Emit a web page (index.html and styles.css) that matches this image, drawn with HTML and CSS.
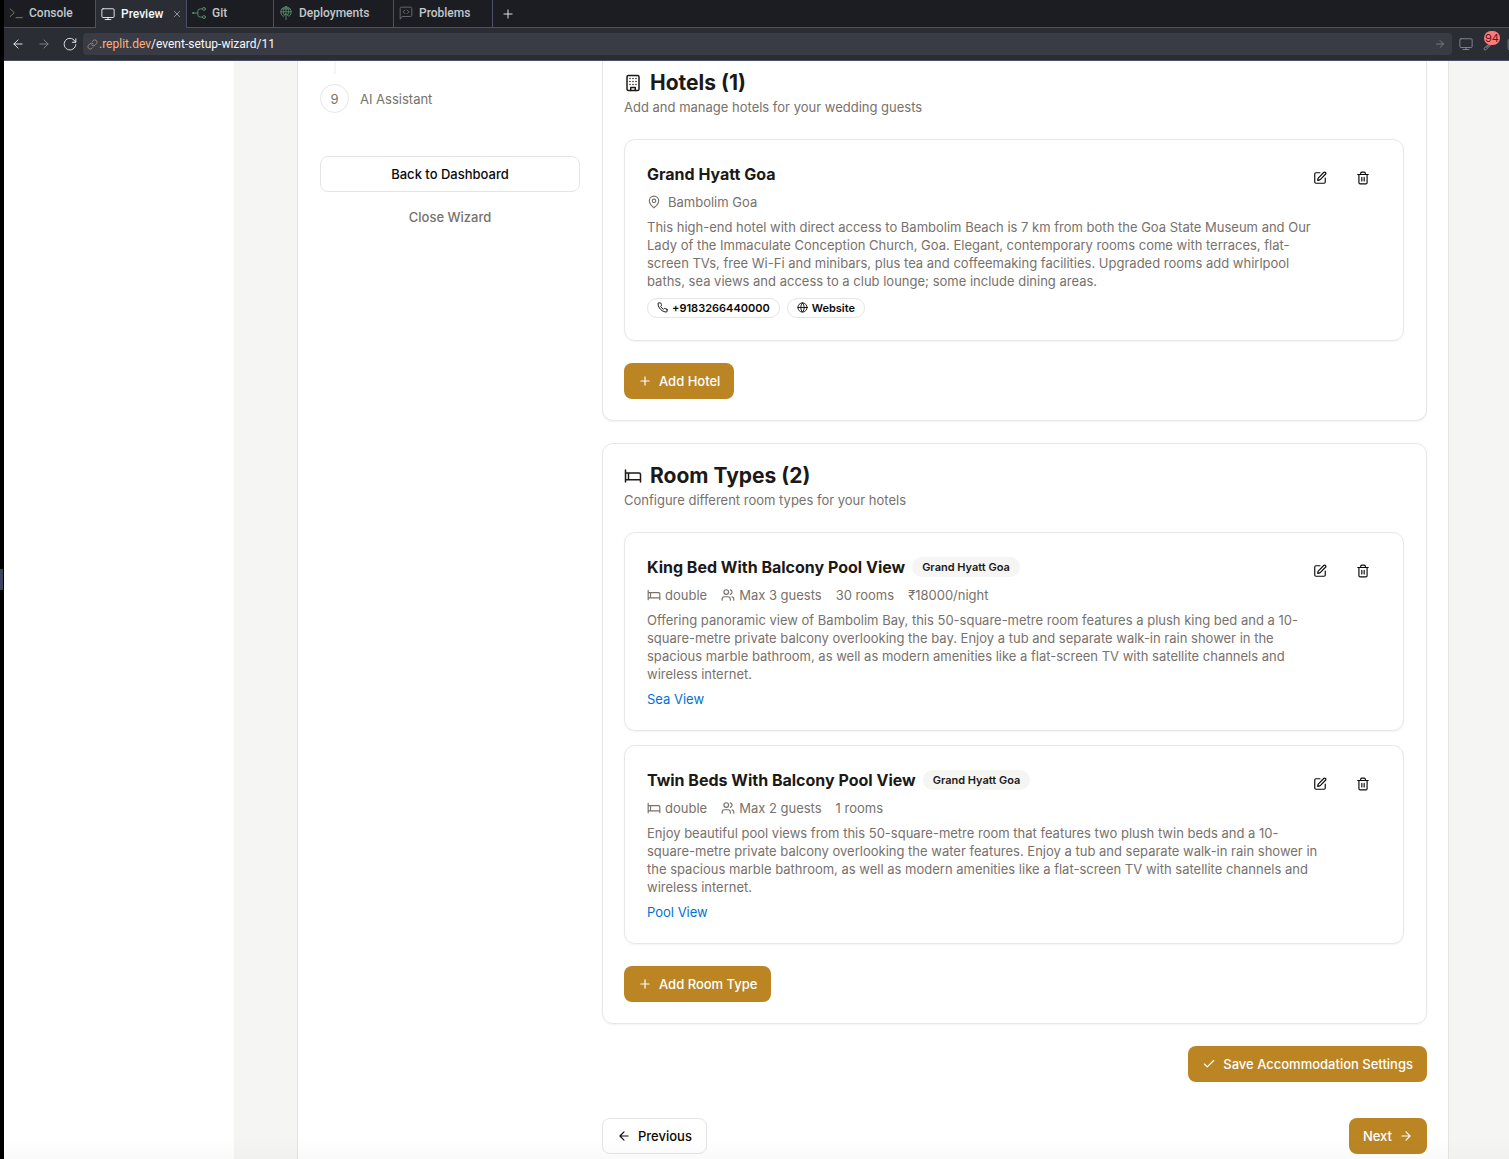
FILE: index.html
```
<!DOCTYPE html>
<html lang="en">
<head>
<meta charset="utf-8">
<meta name="viewport" content="width=device-width, initial-scale=1">
<title>Event Setup Wizard</title>
<link rel="stylesheet" href="styles.css">
</head>
<body>
<svg class="sprite" aria-hidden="true">
  <symbol id="i-arrow-left" viewBox="0 0 24 24"><path d="m12 19-7-7 7-7M19 12H5"/></symbol>
  <symbol id="i-arrow-right" viewBox="0 0 24 24"><path d="M5 12h14M12 5l7 7-7 7"/></symbol>
  <symbol id="i-monitor" viewBox="0 0 24 24"><rect x="1.500" y="3" width="21" height="15" rx="2"/><path d="M7 21.500h10M12 18v3.500"/></symbol>
  <symbol id="i-bed" viewBox="0 0 24 24"><path d="M2 4v16M2 8h18a2 2 0 0 1 2 2v10M2 17h20M6 8v9"/></symbol>
  <symbol id="i-users" viewBox="0 0 24 24"><path d="M16 21v-2a4 4 0 0 0-4-4H6a4 4 0 0 0-4 4v2"/><circle cx="9" cy="7" r="4"/><path d="M22 21v-2a4 4 0 0 0-3-3.870M16 3.130a4 4 0 0 1 0 7.750"/></symbol>
  <symbol id="i-edit" viewBox="0 0 24 24"><path d="M12 3H5a2 2 0 0 0-2 2v14a2 2 0 0 0 2 2h14a2 2 0 0 0 2-2v-7"/><path d="M18.375 2.625a1 1 0 0 1 3 3l-9.013 9.014a2 2 0 0 1-.853.505l-2.873.84a.5.5 0 0 1-.62-.62l.84-2.873a2 2 0 0 1 .506-.852z"/></symbol>
  <symbol id="i-trash" viewBox="0 0 24 24"><path d="M3 6h18M19 6v14a2 2 0 0 1-2 2H7a2 2 0 0 1-2-2V6M8 6V4a2 2 0 0 1 2-2h4a2 2 0 0 1 2 2v2M10 11v6M14 11v6"/></symbol>
  <symbol id="i-plus" viewBox="0 0 24 24"><path d="M5 12h14M12 5v14"/></symbol>
</svg>

<div class="app">
  <div class="rail"><span class="rail-handle"></span></div>
  <div class="pane">
    <nav class="tabs" aria-label="Workspace tabs">
      <button class="tab tab-console" type="button">
        <svg class="icon olive" viewBox="0 0 24 24"><path d="m2 5 7 6.500L2 18M12 20h11"/></svg>Console
      </button>
      <div class="tab tab-preview">
        <button class="tab-label" type="button"><svg class="icon" ><use href="#i-monitor"/></svg>Preview</button>
        <button class="tab-close" type="button" aria-label="Close Preview"><svg viewBox="0 0 24 24"><path d="M4 4l16 16M20 4 4 20"/></svg></button>
      </div>
      <button class="tab tab-git" type="button">
        <svg class="icon green" viewBox="0 0 24 24"><path d="M1 12h9M18 5h-4a4 4 0 0 0-4 4v6a4 4 0 0 0 4 4h4"/><circle cx="20.500" cy="5" r="2.500"/><circle cx="20.500" cy="19" r="2.500"/><circle cx="2" cy="12" r="1"/></svg>Git
      </button>
      <button class="tab tab-deploy" type="button">
        <svg class="icon green" viewBox="0 0 24 24"><path d="M7 18a9 9 0 1 1 10 0M3 10h18M9 15c-3-5-2-10 3-14 5 4 6 9 3 14M12 1v9M5 5h14M12 24V13M8 17l4-4 4 4"/></svg>Deployments
      </button>
      <button class="tab tab-problems" type="button">
        <svg class="icon dim" viewBox="0 0 24 24"><path d="M2 22V4a2 2 0 0 1 2-2h16a2 2 0 0 1 2 2v12a2 2 0 0 1-2 2H6ZM10 7l-3 3 3 3M14 7l3 3-3 3"/></svg>Problems
      </button>
      <button class="tab-add" type="button" aria-label="New tab"><svg class="icon"><use href="#i-plus"/></svg></button>
    </nav>

    <div class="toolbar">
      <button class="tool bright" type="button" aria-label="Back"><svg class="icon"><use href="#i-arrow-left"/></svg></button>
      <button class="tool" type="button" aria-label="Forward"><svg class="icon"><use href="#i-arrow-right"/></svg></button>
      <button class="tool bright" type="button" aria-label="Reload"><svg class="icon" viewBox="0 0 24 24"><path d="M22 3v6h-6M21.500 9A10 10 0 1 0 22 13"/></svg></button>
      <div class="address">
        <svg class="icon link-icon" viewBox="0 0 24 24"><path d="M10 13a5 5 0 0 0 7.540.540l3-3a5 5 0 0 0-7.070-7.070l-1.720 1.710M14 11a5 5 0 0 0-7.540-.540l-3 3a5 5 0 0 0 7.070 7.070l1.710-1.710"/></svg>
        <label class="host" for="path">.replit.dev</label>
        <input class="path" id="path" type="text" value="/event-setup-wizard/11">
        <button class="go" type="button" aria-label="Go"><svg class="icon"><use href="#i-arrow-right"/></svg></button>
      </div>
      <div class="tools-end">
        <button class="tool" type="button" aria-label="Device size"><svg class="icon"><use href="#i-monitor"/></svg></button>
        <button class="tool has-badge" type="button" aria-label="Dev tools"><svg class="icon" viewBox="0 0 24 24"><path d="M14 9 2 19a2.200 2.200 0 0 0 3 3L16 11M6 18l8-7M13 10a6 6 0 0 1 7-7M22 6a6 6 0 0 1-7 6"/></svg><span class="count">94</span></button>
        <button class="tool" type="button" aria-label="Open in new tab"><svg class="icon" viewBox="0 0 24 24"><path d="M11 4H4a2 2 0 0 0-2 2v14a2 2 0 0 0 2 2h14a2 2 0 0 0 2-2v-7M15 2h7v7M10 14 22 2"/></svg></button>
      </div>
    </div>

    <div class="page">
      <div class="wizard">
        <aside class="steps">
          <div class="connector"></div>
          <a class="step" href="#ai"><span class="step-number">9</span>AI Assistant</a>
          <button class="btn btn-outline btn-back" type="button">Back to Dashboard</button>
          <button class="btn btn-ghost" type="button">Close Wizard</button>
        </aside>

        <main class="content">
          <section class="card card-first">
            <h2 class="card-title"><svg class="icon" viewBox="0 0 24 24"><rect x="4" y="2" width="16" height="20" rx="2"/><path d="M9 22v-4h6v4M8 6h.01M16 6h.01M12 6h.01M12 10h.01M12 14h.01M16 10h.01M16 14h.01M8 10h.01M8 14h.01"/></svg>Hotels (1)</h2>
            <p class="card-subtitle">Add and manage hotels for your wedding guests</p>
            <div class="items">
              <article class="item">
                <div class="item-body">
                  <h3 class="item-title">Grand Hyatt Goa</h3>
                  <div class="meta"><span class="place"><svg class="icon" viewBox="0 0 24 24"><path d="M20 10c0 6-8 12-8 12s-8-6-8-12a8 8 0 0 1 16 0Z"/><circle cx="12" cy="10" r="3"/></svg>Bambolim Goa</span></div>
                  <p class="description">This high-end hotel with direct access to Bambolim Beach is 7 km from both the Goa State Museum and Our Lady of the Immaculate Conception Church, Goa. Elegant, contemporary rooms come with terraces, flat-screen TVs, free Wi-Fi and minibars, plus tea and coffeemaking facilities. Upgraded rooms add whirlpool baths, sea views and access to a club lounge; some include dining areas.</p>
                  <div class="pills">
                    <span class="pill"><svg class="icon" viewBox="0 0 24 24"><path d="M22 16.920v3a2 2 0 0 1-2.180 2 19.790 19.790 0 0 1-8.630-3.070 19.500 19.500 0 0 1-6-6 19.790 19.790 0 0 1-3.070-8.670A2 2 0 0 1 4.110 2h3a2 2 0 0 1 2 1.720 12.840 12.840 0 0 0 .7 2.810 2 2 0 0 1-.45 2.110L8.090 9.910a16 16 0 0 0 6 6l1.270-1.270a2 2 0 0 1 2.110-.45 12.840 12.840 0 0 0 2.810.7A2 2 0 0 1 22 16.920z"/></svg>+9183266440000</span>
                    <a class="pill" href="#website"><svg class="icon" viewBox="0 0 24 24"><circle cx="12" cy="12" r="10"/><path d="M12 2a14.500 14.500 0 0 0 0 20 14.500 14.500 0 0 0 0-20M2 12h20"/></svg>Website</a>
                  </div>
                </div>
                <div class="actions">
                  <button class="icon-btn" type="button" aria-label="Edit hotel"><svg class="icon"><use href="#i-edit"/></svg></button>
                  <button class="icon-btn" type="button" aria-label="Delete hotel"><svg class="icon"><use href="#i-trash"/></svg></button>
                </div>
              </article>
            </div>
            <button class="btn btn-primary" type="button"><svg class="icon"><use href="#i-plus"/></svg>Add Hotel</button>
          </section>

          <section class="card">
            <h2 class="card-title"><svg class="icon"><use href="#i-bed"/></svg>Room Types (2)</h2>
            <p class="card-subtitle">Configure different room types for your hotels</p>
            <div class="items">
              <article class="item">
                <div class="item-body">
                  <h3 class="item-title">King Bed With Balcony Pool View <span class="tag">Grand Hyatt Goa</span></h3>
                  <div class="meta">
                    <span class="fact"><svg class="icon"><use href="#i-bed"/></svg>double</span>
                    <span class="fact"><svg class="icon"><use href="#i-users"/></svg>Max 3 guests</span>
                    <span>30 rooms</span>
                    <span>₹18000/night</span>
                  </div>
                  <p class="description">Offering panoramic view of Bambolim Bay, this 50-square-metre room features a plush king bed and a 10-square-metre private balcony overlooking the bay. Enjoy a tub and separate walk-in rain shower in the spacious marble bathroom, as well as modern amenities like a flat-screen TV with satellite channels and wireless internet.</p>
                  <p class="view">Sea View</p>
                </div>
                <div class="actions">
                  <button class="icon-btn" type="button" aria-label="Edit room type"><svg class="icon"><use href="#i-edit"/></svg></button>
                  <button class="icon-btn" type="button" aria-label="Delete room type"><svg class="icon"><use href="#i-trash"/></svg></button>
                </div>
              </article>
              <article class="item">
                <div class="item-body">
                  <h3 class="item-title">Twin Beds With Balcony Pool View <span class="tag">Grand Hyatt Goa</span></h3>
                  <div class="meta">
                    <span class="fact"><svg class="icon"><use href="#i-bed"/></svg>double</span>
                    <span class="fact"><svg class="icon"><use href="#i-users"/></svg>Max 2 guests</span>
                    <span>1 rooms</span>
                  </div>
                  <p class="description">Enjoy beautiful pool views from this 50-square-metre room that features two plush twin beds and a 10-square-metre private balcony overlooking the water features. Enjoy a tub and separate walk-in rain shower in the spacious marble bathroom, as well as modern amenities like a flat-screen TV with satellite channels and wireless internet.</p>
                  <p class="view">Pool View</p>
                </div>
                <div class="actions">
                  <button class="icon-btn" type="button" aria-label="Edit room type"><svg class="icon"><use href="#i-edit"/></svg></button>
                  <button class="icon-btn" type="button" aria-label="Delete room type"><svg class="icon"><use href="#i-trash"/></svg></button>
                </div>
              </article>
            </div>
            <button class="btn btn-primary" type="button"><svg class="icon"><use href="#i-plus"/></svg>Add Room Type</button>
          </section>

          <button class="btn btn-primary btn-save" type="button"><svg class="icon" viewBox="0 0 24 24"><path d="M20 6 9 17l-5-5"/></svg>Save Accommodation Settings</button>

          <div class="pager">
            <button class="btn btn-outline" type="button"><svg class="icon"><use href="#i-arrow-left"/></svg>Previous</button>
            <button class="btn btn-primary" type="button">Next<svg class="icon"><use href="#i-arrow-right"/></svg></button>
          </div>
        </main>
      </div>
    </div>
  </div>
</div>
</body>
</html>
```
FILE: styles.css
```
* { box-sizing: border-box; }

body {
  margin: 0;
  font-family: Inter, "Liberation Sans", sans-serif;
  font-size: 13px;
  line-height: 18px;
  color: #78716c;
  background: #fff;
}

h2, h3, p { margin: 0; }

button, input {
  font: inherit;
  color: inherit;
  border: 0;
  padding: 0;
  background: none;
}

a { color: inherit; text-decoration: none; }

svg {
  fill: none;
  stroke: currentColor;
  stroke-width: 2;
  stroke-linecap: round;
  stroke-linejoin: round;
}

.sprite { display: none; }
.icon { width: 14px; height: 14px; flex: none; }

.app { display: flex; height: 100vh; overflow: hidden; }

.rail {
  flex: none;
  width: 4px;
  background: #000;
  display: flex;
  align-items: center;
}
.rail-handle {
  width: 3px;
  height: 21px;
  background: #3c445c;
}

.pane { flex: 1; min-width: 0; display: flex; flex-direction: column; position: relative; }

/* Soft shade over the bottom edge of the preview */
.pane::after {
  content: "";
  position: absolute;
  inset: auto 0 0 0;
  height: 24px;
  background: linear-gradient(rgba(0, 0, 0, 0), rgba(0, 0, 0, 0.02));
  pointer-events: none;
}

/* Workspace tabs */
.tabs {
  flex: none;
  display: flex;
  height: 28px;
  background: #1c1d22;
  border-bottom: 1px solid #4b5068;
  font-family: Roboto, "Liberation Sans", sans-serif;
  font-size: 12px;
  font-weight: 500;
  color: #c2c8cc;
}
.tab {
  display: flex;
  align-items: center;
  gap: 6px;
  padding: 0 5px 1px;
  border-right: 1px solid #4b5068;
}
.tabs svg { stroke-width: 1.5; }
.tab-console { width: 92px; }
.tab-preview { width: 91px; background: #2b2d35; color: #f5f9fc; height: 28px; justify-content: space-between; }
.tab-git { width: 87px; }
.tab-deploy { width: 120px; }
.tab-problems { width: 99px; }
.tab-label { display: flex; align-items: center; gap: 6px; }
.tab-close svg { display: block; width: 8px; height: 8px; }
.tab-add { width: 30px; display: flex; align-items: center; justify-content: center; color: #f5f9fc; }
.olive { color: #8c826a; }
.green { color: #5d9472; }
.dim { color: #6c6f78; }

/* Address toolbar */
.toolbar {
  flex: none;
  display: flex;
  align-items: center;
  height: 33px;
  background: #2b2d35;
  border-bottom: 1px solid #4b5068;
  padding-left: 1px;
  color: #8a8d96;
  overflow: hidden;
}
.toolbar svg { display: block; stroke-width: 1.5; }
.tool { flex: none; width: 26px; display: flex; justify-content: center; }
.bright { color: #f5f9fc; }
.address {
  flex: 1;
  min-width: 0;
  display: flex;
  align-items: center;
  height: 22px;
  padding: 0 6px 0 4px;
  border-radius: 4px;
  background: #3a3c45;
  font-family: Roboto, "Liberation Sans", sans-serif;
  font-size: 12px;
  font-weight: 400;
}
.link-icon { width: 11px; height: 11px; color: #d09a72; }
.host { color: #ffb07c; padding-left: 1px; }
.path { flex: 1; min-width: 0; height: 22px; color: #f5f9fc; outline: 0; }
.go .icon { width: 12px; height: 12px; }
.tools-end { flex: none; width: 57px; display: flex; overflow: hidden; padding: 9px 0 9px 2px; }
.tools-end .tool { width: 24px; }
.has-badge { position: relative; }
.count {
  position: absolute;
  top: -6px;
  right: 2px;
  width: 16px;
  height: 14px;
  border-radius: 7px;
  background: #ff7b7b;
  color: #5c1a1a;
  font-size: 11px;
  line-height: 14px;
  text-align: center;
}

/* Scrolled page */
.page {
  flex: 1;
  min-height: 0;
  overflow: hidden;
  margin-left: 230px;
  padding: 0 60px 0 63px;
  background: #f5f5f4;
}
.wizard {
  display: flex;
  gap: 22px;
  min-height: 100%;
  padding: 0 21px 22px 22px;
  background: #fff;
  border: 1px solid #e7e5e4;
  border-width: 0 1px;
}

.steps { flex: none; width: 260px; display: flex; flex-direction: column; }
.connector { width: 2px; height: 13px; margin-left: 14px; background: #f5f5f4; }
.step { display: flex; align-items: center; gap: 11px; margin-top: 10px; }
.step-number {
  width: 29px;
  height: 29px;
  display: flex;
  align-items: center;
  justify-content: center;
  border: 1px solid #e7e5e4;
  border-radius: 50%;
}

.btn {
  display: inline-flex;
  align-items: center;
  justify-content: center;
  gap: 7px;
  height: 36px;
  padding: 0 14px 1px;
  border-radius: 8px;
  font-weight: 500;
}
.btn-outline { border: 1px solid #e7e5e4; background: #fff; color: #0c0a09; }
.btn-primary { background: #bb8523; color: #fff; }
.btn-back { margin-top: 43px; }
.btn-ghost { margin-top: 7px; }

.content { flex: 1; min-width: 0; }

.card {
  margin-bottom: 22px;
  padding: 20px 22px 21px 21px;
  border: 1px solid #e7e7e7;
  border-radius: 11px;
  box-shadow: 0 1px 2px rgba(0, 0, 0, 0.05);
}
.card-first { padding-top: 10px; border-top: 0; border-radius: 0 0 11px 11px; }
.card-title {
  display: flex;
  align-items: center;
  gap: 8px;
  font-size: 21px;
  line-height: 24px;
  font-weight: 700;
  color: #1c1917;
}
.card-title .icon { width: 18px; height: 18px; }
.card-subtitle { margin-top: 3px; }

.items { display: grid; gap: 14px; margin: 23px 0 22px; }
.item {
  display: flex;
  padding: 22px;
  border: 1px solid #e7e7e7;
  border-radius: 11px;
  box-shadow: 0 1px 2px rgba(0, 0, 0, 0.05);
}
.item-body { flex: 1; min-width: 0; }
.item-title {
  display: flex;
  align-items: center;
  gap: 7px;
  font-size: 16px;
  line-height: 24px;
  font-weight: 700;
  color: #1c1917;
}
.tag {
  padding: 0 10px;
  border-radius: 10px;
  background: #f5f5f4;
  font-size: 11px;
  line-height: 20px;
  font-weight: 600;
}
.meta { display: flex; gap: 14px; margin-top: 7px; }
.place, .fact { display: flex; align-items: center; gap: 4px; }
.place { gap: 7px; }
/* The text may run on a little under the action buttons */
.description { margin: 7px -20px 0 0; }
.view { margin-top: 7px; color: #0070d8; }

.pills { display: flex; gap: 7px; margin-top: 8px; }
.pill {
  display: flex;
  align-items: center;
  gap: 4px;
  height: 20px;
  padding: 0 9px 1px;
  border: 1px solid #e7e5e4;
  border-radius: 10px;
  font-size: 11px;
  font-weight: 600;
  color: #0c0a09;
}
.pill .icon { width: 11px; height: 11px; }

.actions { flex: none; display: flex; gap: 7px; }
.icon-btn {
  width: 36px;
  height: 32px;
  display: flex;
  align-items: center;
  justify-content: center;
  color: #0c0a09;
}

.btn-save { display: flex; margin-left: auto; }
.pager { display: flex; justify-content: space-between; margin-top: 36px; }
```
